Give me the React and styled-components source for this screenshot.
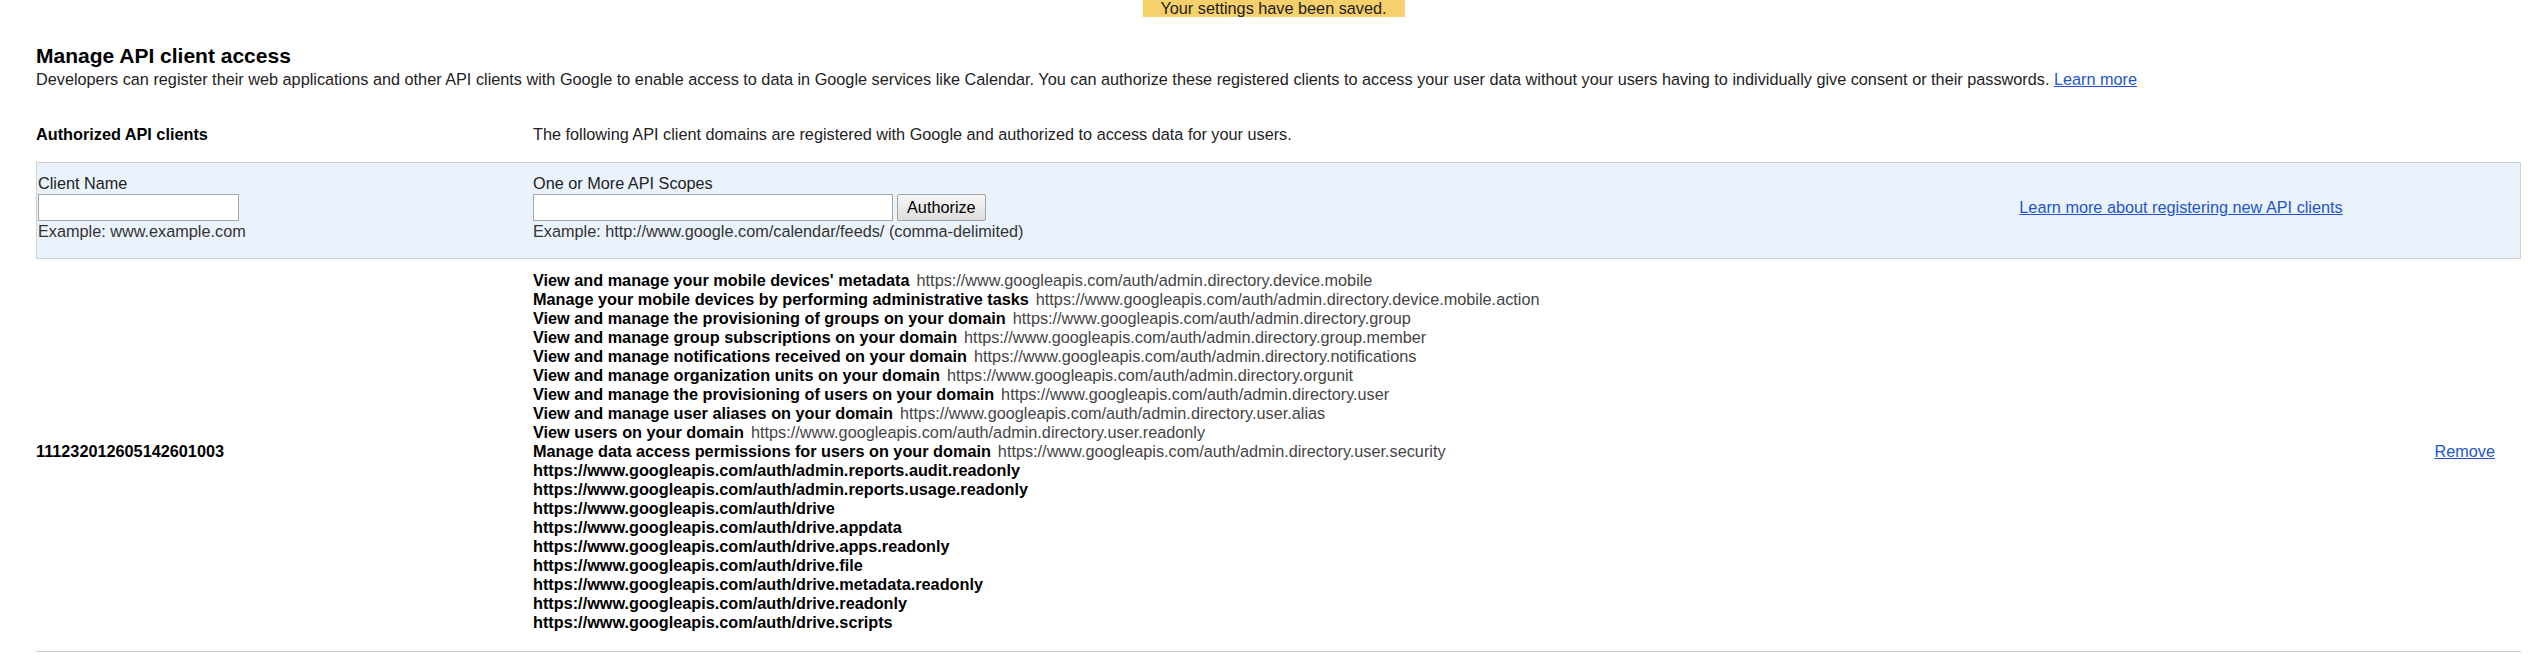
import React from 'react';
import styled, { createGlobalStyle } from 'styled-components';

const GlobalStyle = createGlobalStyle`
  html, body {
    margin: 0;
    padding: 0;
    background: #fff;
  }
  body {
    font-family: 'Liberation Sans', Arial, sans-serif;
    font-size: 16.25px;
    line-height: 19px;
    color: #222;
  }
`;

const Page = styled.div`
  position: relative;
  padding: 0 26px 0 36px;
`;

const Banner = styled.div`
  position: absolute;
  top: 0;
  left: 50%;
  transform: translateX(-50%);
  background: #f6d06a;
  color: #222;
  padding: 0 18px;
  line-height: 17px;
  white-space: nowrap;
`;

const Title = styled.h1`
  margin: 0 0 2px;
  padding-top: 44px;
  font-size: 21px;
  line-height: 24px;
  font-weight: bold;
  color: #000;
`;

const Intro = styled.p`
  margin: 0;
  white-space: nowrap;
`;

const Link = styled.a`
  color: #2255cc;
  text-decoration: underline;
  cursor: pointer;
`;

const Row = styled.div`
  display: grid;
  grid-template-columns: ${(p) => p.$first || '497px'} 1fr ${(p) => p.$last || 'auto'};
  align-items: start;
`;

const SectionRow = styled(Row)`
  margin-top: 36px;
`;

const SectionLabel = styled.div`
  font-weight: bold;
  color: #000;
`;

const FormPanel = styled(Row)`
  margin-top: 18px;
  background: #eaf2fc;
  border: 1px solid #cdd2da;
  padding: 11px 0 17px 1px;
`;

const Field = styled.div`
  display: flex;
  flex-direction: column;
  align-items: flex-start;
`;

const FieldLabel = styled.label`
  color: #222;
`;

const InputLine = styled.div`
  display: flex;
  gap: 4px;
  margin: 1px 0 1px;
`;

const TextInput = styled.input`
  box-sizing: border-box;
  width: ${(p) => p.$width}px;
  height: 27px;
  border: 1px solid #a6a6a6;
  background: #fff;
  padding: 2px 4px;
  font: inherit;
  outline: none;
`;

const Button = styled.button`
  box-sizing: border-box;
  height: 27px;
  padding: 0 9px;
  border: 1px solid #a3a3a3;
  border-radius: 2px;
  background: linear-gradient(#f6f6f6, #dedede);
  font-family: inherit;
  font-size: 16.25px;
  color: #000;
  cursor: pointer;
`;

const Hint = styled.div`
  color: #333;
`;

const HelpCell = styled.div`
  align-self: center;
  text-align: center;
`;

const ClientRow = styled(Row)`
  border-bottom: 1px solid #cccccc;
  padding: 12px 0 19px;
`;

const ClientId = styled.div`
  font-weight: bold;
  color: #000;
  align-self: center;
`;

const ScopeList = styled.ul`
  list-style: none;
  margin: 0;
  padding: 0;
`;

const Scope = styled.li`
  white-space: nowrap;
`;

const ScopeName = styled.span`
  font-weight: bold;
  color: #000;
`;

const ScopeUrl = styled.span`
  color: #444;
  padding-left: 7px;
`;

const RemoveCell = styled.div`
  align-self: center;
  padding-right: 26px;
`;

const scopes = [
  ["View and manage your mobile devices' metadata", 'https://www.googleapis.com/auth/admin.directory.device.mobile'],
  ['Manage your mobile devices by performing administrative tasks', 'https://www.googleapis.com/auth/admin.directory.device.mobile.action'],
  ['View and manage the provisioning of groups on your domain', 'https://www.googleapis.com/auth/admin.directory.group'],
  ['View and manage group subscriptions on your domain', 'https://www.googleapis.com/auth/admin.directory.group.member'],
  ['View and manage notifications received on your domain', 'https://www.googleapis.com/auth/admin.directory.notifications'],
  ['View and manage organization units on your domain', 'https://www.googleapis.com/auth/admin.directory.orgunit'],
  ['View and manage the provisioning of users on your domain', 'https://www.googleapis.com/auth/admin.directory.user'],
  ['View and manage user aliases on your domain', 'https://www.googleapis.com/auth/admin.directory.user.alias'],
  ['View users on your domain', 'https://www.googleapis.com/auth/admin.directory.user.readonly'],
  ['Manage data access permissions for users on your domain', 'https://www.googleapis.com/auth/admin.directory.user.security'],
  ['https://www.googleapis.com/auth/admin.reports.audit.readonly'],
  ['https://www.googleapis.com/auth/admin.reports.usage.readonly'],
  ['https://www.googleapis.com/auth/drive'],
  ['https://www.googleapis.com/auth/drive.appdata'],
  ['https://www.googleapis.com/auth/drive.apps.readonly'],
  ['https://www.googleapis.com/auth/drive.file'],
  ['https://www.googleapis.com/auth/drive.metadata.readonly'],
  ['https://www.googleapis.com/auth/drive.readonly'],
  ['https://www.googleapis.com/auth/drive.scripts'],
];

const App = () => {
  return (
    <Page>
      <GlobalStyle />
      <Banner>Your settings have been saved.</Banner>
      <Title>Manage API client access</Title>
      <Intro>
        Developers can register their web applications and other API clients with Google to enable access to data in
        Google services like Calendar. You can authorize these registered clients to access your user data without your
        users having to individually give consent or their passwords. <Link>Learn more</Link>
      </Intro>

      <SectionRow>
        <SectionLabel>Authorized API clients</SectionLabel>
        <div>The following API client domains are registered with Google and authorized to access data for your users.</div>
      </SectionRow>

      <FormPanel $first='495px' $last='678px'>
        <Field>
          <FieldLabel>Client Name</FieldLabel>
          <InputLine>
            <TextInput $width={201} />
          </InputLine>
          <Hint>Example: www.example.com</Hint>
        </Field>
        <Field>
          <FieldLabel>One or More API Scopes</FieldLabel>
          <InputLine>
            <TextInput $width={360} />
            <Button>Authorize</Button>
          </InputLine>
          <Hint>Example: http://www.google.com/calendar/feeds/ (comma-delimited)</Hint>
        </Field>
        <HelpCell>
          <Link>Learn more about registering new API clients</Link>
        </HelpCell>
      </FormPanel>

      <ClientRow>
        <ClientId>111232012605142601003</ClientId>
        <ScopeList>
          {scopes.map(([name, url]) => (
            <Scope key={name}>
              <ScopeName>{name}</ScopeName>
              {url && <ScopeUrl>{url}</ScopeUrl>}
            </Scope>
          ))}
        </ScopeList>
        <RemoveCell>
          <Link>Remove</Link>
        </RemoveCell>
      </ClientRow>
    </Page>
  );
};

export default App;
